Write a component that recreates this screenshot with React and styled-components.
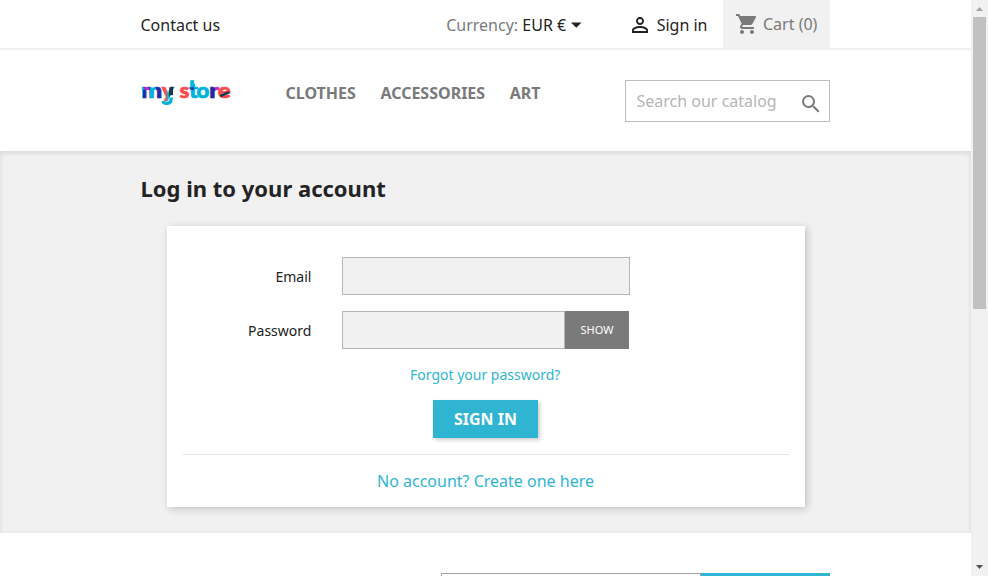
import React from "react";
import styled, { createGlobalStyle, css } from "styled-components";

const GlobalStyle = createGlobalStyle`
  *, *::before, *::after { box-sizing: border-box; }
  html, body { margin: 0; height: 100%; overflow: hidden; }
  body {
    font-family: "Noto Sans", sans-serif;
    font-size: 16px;
    line-height: 20px;
    color: #232323;
    background: #fff;
  }
  input, button { font-family: inherit; margin: 0; border-radius: 0; outline: none; }
`;

const Viewport = styled.div`
  display: flex;
  height: 576px;
  overflow: hidden;
`;

const Page = styled.div`
  width: 971px;
  flex: none;
`;

const Container = styled.div`
  width: 689.5px;
  margin: 0 141px 0 140.5px;
`;

const TopNav = styled.nav`
  height: 50px;
  border-bottom: 2px solid #f1f1f1;
`;

const NavRow = styled(Container)`
  display: flex;
  height: 48px;
  align-items: center;
`;

const NavLink = styled.a`
  display: flex;
  align-items: center;
  white-space: nowrap;
  padding-top: 1px;
`;

const Currency = styled.div`
  display: flex;
  align-items: center;
  white-space: pre;
  padding-top: 1px;
  margin-left: auto;
  color: #7a7a7a;
  span { color: #232323; }
  svg { margin-left: 4.5px; }
`;

const SignInLink = styled(NavLink)`
  margin-left: 46.5px;
  svg { margin-right: 4.5px; }
`;

const Cart = styled.div`
  display: flex;
  align-items: center;
  width: 107px;
  height: 48px;
  margin-left: 15.5px;
  padding-left: 12px;
  background: #f1f1f1;
  color: #7a7a7a;
  white-space: nowrap;
  svg { margin-right: 4px; }
`;

const HeaderRow = styled(Container)`
  display: flex;
  height: 101px;
  align-items: flex-start;
`;

const Logo = styled.svg`
  display: block;
  width: 99px;
  height: 40px;
  margin-top: 22px;
`;

const Menu = styled.div`
  display: flex;
  gap: 24.6px;
  margin: 33px 0 0 46px;
  font-weight: 700;
  color: #7a7a7a;
  white-space: nowrap;
`;

const Search = styled.div`
  display: flex;
  align-items: center;
  width: 205px;
  height: 42px;
  margin: 30px 0 0 auto;
  border: 1px solid #bebebe;
  padding: 0 6.5px 0 10.5px;
  input {
    flex: 1;
    min-width: 0;
    height: 40px;
    border: 0;
    padding: 0;
    font-size: 16px;
    background: transparent;
  }
  input::placeholder { color: #b5b5b5; opacity: 1; }
  svg { flex: none; margin-top: 5px; }
`;

const Main = styled.main`
  height: 382px;
  padding-top: 23px;
  background: #f1f1f1;
  box-shadow: inset 0 2px 5px 0 rgba(0, 0, 0, 0.11);
`;

const Title = styled.h1`
  margin: 0;
  font-size: 22px;
  line-height: 28px;
  font-weight: 700;
`;

const Card = styled.section`
  width: 638px;
  height: 281px;
  margin: 24px 0 0 26.5px;
  padding: 31px 16px 0;
  background: #fff;
  box-shadow: 2px 2px 8px 0 rgba(0, 0, 0, 0.2);
`;

const FormRow = styled.div`
  display: flex;
  height: 38px;
  margin-bottom: 16px;
`;

const Label = styled.label`
  width: 128.4px;
  margin-right: 30.6px;
  text-align: right;
  font-size: 14px;
  line-height: 40px;
`;

const Field = styled.input`
  width: ${(p) => p.$width}px;
  height: 38px;
  padding: 8px 16px;
  border: 1px solid #b5b5b5;
  background: #f1f1f1;
`;

const Button = styled.button`
  border: 0;
  height: 38px;
  padding: 0;
  color: #fff;
  ${(p) =>
    p.$primary
      ? css`
          display: block;
          width: 105px;
          margin: 0 0 0 250px;
          background: #2fb5d2;
          box-shadow: 2px 2px 4px 0 rgba(0, 0, 0, 0.2);
          font-size: 16px;
          font-weight: 700;
        `
      : css`
          width: 64px;
          padding: 0 0 2px;
          background: #7a7a7a;
          font-size: 11px;
        `}
`;

const Forgot = styled.a`
  display: block;
  width: max-content;
  margin: -1px 0 14px 227px;
  font-size: 14px;
  line-height: 22px;
  color: #2fb5d2;
`;

const Register = styled.div`
  margin-top: 16px;
  padding: 16px 1px 0 0;
  border-top: 1px solid #e5e5e5;
  text-align: center;
  color: #2fb5d2;
`;

const Newsletter = styled(Container)`
  display: flex;
  justify-content: flex-end;
  height: 43px;
  padding-top: 40px;
`;

const NewsletterField = styled.div`
  width: 260px;
  border: 1px solid #a4a4a4;
  border-bottom: 0;
`;

const NewsletterButton = styled.div`
  width: 129px;
  background: #2fb5d2;
`;

const Scrollbar = styled.div`
  display: flex;
  flex-direction: column;
  width: 17px;
  height: 576px;
  background: #f1f1f1;
  svg { display: block; flex: none; }
`;

const Thumb = styled.div`
  width: 13px;
  height: 292px;
  margin: 0 2px auto;
  background: #c1c1c1;
`;

const Icon = ({ size, color, d }) => (
  <svg width={size} height={size} viewBox="0 0 24 24" fill={color} aria-hidden="true">
    <path d={d} />
  </svg>
);

const personPath =
  "M12 5.9a2.1 2.1 0 1 1 0 4.2 2.1 2.1 0 0 1 0-4.2m0 9c2.97 0 6.1 1.46 6.1 2.1v1.1H5.9V17c0-.64 3.13-2.1 6.1-2.1M12 4C9.79 4 8 5.79 8 8s1.79 4 4 4 4-1.79 4-4-1.79-4-4-4zm0 9c-2.67 0-8 1.34-8 4v3h16v-3c0-2.66-5.33-4-8-4z";
const cartPath =
  "M7 18c-1.1 0-1.99.9-1.99 2S5.9 22 7 22s2-.9 2-2-.9-2-2-2zM1 2v2h2l3.6 7.59-1.35 2.45c-.16.28-.25.61-.25.96 0 1.1.9 2 2 2h12v-2H7.42c-.14 0-.25-.11-.25-.25l.03-.12.9-1.63h7.45c.75 0 1.41-.41 1.75-1.03l3.58-6.49A1.003 1.003 0 0 0 20 4H5.21l-.94-2H1zm16 16c-1.1 0-1.99.9-1.99 2s.89 2 1.99 2 2-.9 2-2-.9-2-2-2z";
const searchPath =
  "M15.5 14h-.79l-.28-.27A6.471 6.471 0 0 0 16 9.5 6.5 6.5 0 1 0 9.5 16c1.61 0 3.09-.59 4.23-1.57l.27.28v.79l5 4.99L20.49 19l-4.99-5zm-6 0C7.01 14 5 11.99 5 9.5S7.01 5 9.5 5 14 7.01 14 9.5 11.99 14 9.5 14z";

const gradients = {
  m: [["#00b3dd", 0.1], ["#2729a5", 0.4], ["#00aedb", 0.68], ["#2729a5", 1]],
  y: [["#ff4b50", 0.42], ["#00b3dd", 0.6], ["#173c48", 1]],
  r: [["#2129a3", 0.6], ["#c22bc7", 1]],
};

/* letter, x, width, fill */
const letters = [
  ["m", 9.6, 21.2, "url(#logo-m)"],
  ["y", 30.2, 11.8, "url(#logo-y)"],
  ["s", 48, 9.9, "#ff4b50"],
  ["t", 57.4, 9, "#00b3dd"],
  ["o", 65, 12.9, "#00b3dd"],
  ["r", 77.8, 9.4, "url(#logo-r)"],
  ["e", 86.3, 13, "#ff4b50"],
];

const StoreLogo = () => (
  <Logo viewBox="9.5 -7 99 40" role="img" aria-label="my store">
    <defs>
      {Object.entries(gradients).map(([name, stops]) => (
        <linearGradient id={`logo-${name}`} key={name}>
          {stops.map(([color, end], i) => (
            <React.Fragment key={end}>
              <stop offset={i ? stops[i - 1][1] : 0} stopColor={color} />
              <stop offset={end} stopColor={color} />
            </React.Fragment>
          ))}
        </linearGradient>
      ))}
    </defs>
    {letters.map(([ch, x, w, fill]) => (
      <text
        key={ch}
        x={x}
        y="19"
        textLength={w}
        lengthAdjust="spacingAndGlyphs"
        fill={fill}
        stroke={fill}
        strokeWidth="0.7"
        fontFamily="Lato, sans-serif"
        fontWeight="900"
        fontSize="21"
      >
        {ch}
      </text>
    ))}
    <rect x="10.4" y="8.2" width="2.6" height="2.4" fill="#00b3dd" />
    <rect x="13" y="8.2" width="4.6" height="2.6" fill="#c22bc7" />
    <path d="M31.8 22v.6c0 1.2 1.3 1.8 3 1.8 2.7 0 4.9-1.1 4.9-4.4v-1.4" fill="none" stroke="#00b3dd" strokeWidth="3.2" />
    <rect x="38" y="8.2" width="3.5" height="8" fill="#173c48" />
    <rect x="58.8" y="1.2" width="3.8" height="9" fill="#00b3dd" />
    <rect x="58.8" y="8.2" width="3.8" height="2.6" fill="#2735b0" />
    <path d="M88 15.9l9-3.9 1.5 2.2-9.2 4z" fill="#173c48" />
  </Logo>
);

export default function App() {
  return (
    <>
      <GlobalStyle />
      <Viewport>
        <Page>
          <header>
            <TopNav>
              <NavRow>
                <NavLink>Contact us</NavLink>
                <Currency>
                  {"Currency: "}
                  <span>EUR €</span>
                  <svg width="11" height="6" viewBox="0 0 11 6" aria-hidden="true">
                    <path d="M0 .5h10.5L5.25 5.7z" fill="#232323" />
                  </svg>
                </Currency>
                <SignInLink>
                  <Icon size={24} color="#232323" d={personPath} />
                  Sign in
                </SignInLink>
                <Cart>
                  <Icon size={24} color="#7a7a7a" d={cartPath} />
                  Cart (0)
                </Cart>
              </NavRow>
            </TopNav>
            <HeaderRow>
              <StoreLogo />
              <Menu>
                <span>CLOTHES</span>
                <span>ACCESSORIES</span>
                <span>ART</span>
              </Menu>
              <Search>
                <input placeholder="Search our catalog" aria-label="Search" />
                <Icon size={24} color="#7a7a7a" d={searchPath} />
              </Search>
            </HeaderRow>
          </header>
          <Main>
            <Container>
              <Title>Log in to your account</Title>
              <Card>
                <FormRow>
                  <Label htmlFor="email">Email</Label>
                  <Field id="email" type="email" $width={288} />
                </FormRow>
                <FormRow>
                  <Label htmlFor="password">Password</Label>
                  <Field id="password" type="password" $width={223} />
                  <Button type="button">SHOW</Button>
                </FormRow>
                <Forgot>Forgot your password?</Forgot>
                <Button $primary>SIGN IN</Button>
                <Register>No account? Create one here</Register>
              </Card>
            </Container>
          </Main>
          <Newsletter>
            <NewsletterField />
            <NewsletterButton />
          </Newsletter>
        </Page>
        <Scrollbar>
          <svg width="17" height="17" viewBox="0 0 17 17">
            <path d="M5 11h7L8.5 7z" fill="#a3a3a3" />
          </svg>
          <Thumb />
          <svg width="17" height="17" viewBox="0 0 17 17">
            <path d="M5 6h7l-3.5 4z" fill="#505050" />
          </svg>
        </Scrollbar>
      </Viewport>
    </>
  );
}
